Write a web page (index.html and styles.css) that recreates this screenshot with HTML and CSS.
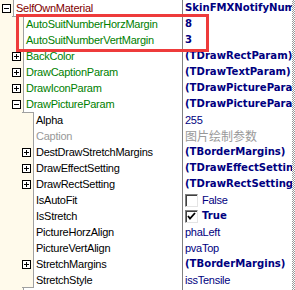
FILE: index.html
```html
<!DOCTYPE html>
<html lang="en">
<head>
  <meta charset="UTF-8">
  <title>Object Inspector</title>
  <link rel="stylesheet" href="styles.css">
</head>
<body>

  <div class="inspector">
    <div class="grid">

      <div class="row lv0">
        <div class="key"><div class="gutter"><span class="exp minus"></span></div><div class="name maroon">SelfOwnMaterial</div></div>
        <div class="value bold">SkinFMXNotifyNumber</div>
      </div>

      <div class="row lv1 first">
        <div class="key"><div class="gutter"></div><div class="name green">AutoSuitNumberHorzMargin</div></div>
        <div class="value bold">8</div>
      </div>
      <div class="row lv1">
        <div class="key"><div class="gutter"></div><div class="name green">AutoSuitNumberVertMargin</div></div>
        <div class="value bold">3</div>
      </div>
      <div class="row lv1">
        <div class="key"><div class="gutter"><span class="exp plus"></span></div><div class="name green">BackColor</div></div>
        <div class="value bold">(TDrawRectParam)</div>
      </div>
      <div class="row lv1">
        <div class="key"><div class="gutter"><span class="exp plus"></span></div><div class="name green">DrawCaptionParam</div></div>
        <div class="value bold">(TDrawTextParam)</div>
      </div>
      <div class="row lv1">
        <div class="key"><div class="gutter"><span class="exp plus"></span></div><div class="name green">DrawIconParam</div></div>
        <div class="value bold">(TDrawPictureParam)</div>
      </div>
      <div class="row lv1">
        <div class="key"><div class="gutter"><span class="exp minus"></span></div><div class="name green">DrawPictureParam</div></div>
        <div class="value bold">(TDrawPictureParam)</div>
      </div>

      <!-- DrawPictureParam children -->
      <div class="row lv2 first">
        <div class="key"><div class="gutter"></div><div class="name">Alpha</div></div>
        <div class="value">255</div>
      </div>
      <div class="row lv2">
        <div class="key"><div class="gutter"></div><div class="name gray">Caption</div></div>
        <div class="value gray cjk">图片绘制参数</div>
      </div>
      <div class="row lv2">
        <div class="key"><div class="gutter"><span class="exp plus"></span></div><div class="name">DestDrawStretchMargins</div></div>
        <div class="value bold">(TBorderMargins)</div>
      </div>
      <div class="row lv2">
        <div class="key"><div class="gutter"><span class="exp plus"></span></div><div class="name">DrawEffectSetting</div></div>
        <div class="value bold">(TDrawEffectSetting)</div>
      </div>
      <div class="row lv2">
        <div class="key"><div class="gutter"><span class="exp plus"></span></div><div class="name">DrawRectSetting</div></div>
        <div class="value bold">(TDrawRectSetting)</div>
      </div>
      <div class="row lv2">
        <div class="key"><div class="gutter"></div><div class="name">IsAutoFit</div></div>
        <div class="value"><span class="check"></span>False</div>
      </div>
      <div class="row lv2">
        <div class="key"><div class="gutter"></div><div class="name">IsStretch</div></div>
        <div class="value bold"><span class="check"><svg width="9" height="9" viewBox="0 0 9 9"><path d="M1 4 L3 6.5 L8 1" fill="none" stroke="#000" stroke-width="1.8"/></svg></span>True</div>
      </div>
      <div class="row lv2">
        <div class="key"><div class="gutter"></div><div class="name">PictureHorzAlign</div></div>
        <div class="value">phaLeft</div>
      </div>
      <div class="row lv2">
        <div class="key"><div class="gutter"></div><div class="name">PictureVertAlign</div></div>
        <div class="value">pvaTop</div>
      </div>
      <div class="row lv2">
        <div class="key"><div class="gutter"><span class="exp plus"></span></div><div class="name">StretchMargins</div></div>
        <div class="value bold">(TBorderMargins)</div>
      </div>
      <div class="row lv2 last">
        <div class="key"><div class="gutter"></div><div class="name">StretchStyle</div></div>
        <div class="value">issTensile</div>
      </div>

      <div class="row lv1">
        <div class="key"><div class="gutter"></div><div class="name green"></div></div>
        <div class="value bold"></div>
      </div>

    </div>
    <div class="strip"></div>

    <!-- highlight frame -->
    <div class="mark"></div>
  </div>

</body>
</html>
```

FILE: styles.css
```css
body {
  margin: 0;
  background: #fff;
  overflow: hidden;
  font-family: "Liberation Sans", Arial, sans-serif;
  font-size: 11px;
  letter-spacing: -0.25px;
}

.inspector {
  position: relative;
  display: flex;
  width: 295px;
  height: 290px;
  overflow: hidden;
}

.grid {
  width: 292px;
}

.row {
  display: flex;
  height: 16px;
  line-height: 16px;
}

.key {
  display: flex;
  width: 182px;
  border-right: 1px solid #808080;
  overflow: hidden;
}

.gutter {
  flex: none;
  display: flex;
  align-items: center;
  justify-content: flex-end;
  padding-right: 2px;
  box-sizing: border-box;
  background-color: #fffaeb;
  border-right: 1px solid #a0a0a0;
}

.lv0 .gutter { width: 14px; }
.lv1 .gutter { width: 24px; }
.lv2 .gutter { width: 34px; }

/* tree line steps */
.first .gutter {
  background: linear-gradient(#a0a0a0, #a0a0a0) right top / 11px 1px no-repeat, #fffaeb;
}

.last .gutter {
  background: linear-gradient(#a0a0a0, #a0a0a0) right bottom / 11px 1px no-repeat, #fffaeb;
}

.exp {
  position: relative;
  width: 9px;
  height: 9px;
  box-sizing: border-box;
  border: 1px solid #000;
  background: #fff;
}

.exp::before,
.exp::after {
  content: "";
  position: absolute;
  background: #000;
}

.exp::before {
  left: 1px;
  top: 3px;
  width: 5px;
  height: 1px;
}

.plus::after {
  left: 3px;
  top: 1px;
  width: 1px;
  height: 5px;
}

.name {
  padding-left: 2px;
  white-space: nowrap;
  color: #000;
}

.maroon { color: #800000; }
.green { color: #008000; }
.gray { color: #999; }

.value {
  display: flex;
  align-items: center;
  width: 109px;
  padding-left: 2px;
  box-sizing: border-box;
  white-space: nowrap;
  overflow: hidden;
  color: #000080;
}

.value.gray { color: #999; }

.bold {
  font-family: "DejaVu Sans", sans-serif;
  font-weight: bold;
  font-size: 10.1px;
  letter-spacing: 0;
}

.cjk {
  font-family: "Noto Sans CJK SC", sans-serif;
  font-size: 12px;
  letter-spacing: 0;
}

.check {
  display: flex;
  align-items: center;
  justify-content: center;
  width: 13px;
  height: 13px;
  box-sizing: border-box;
  margin-right: 4px;
  background: #fff;
  border-top: 1px solid #808080;
  border-left: 1px solid #808080;
  border-bottom: 1px solid #e4e4e4;
  border-right: 1px solid #e4e4e4;
  box-shadow: inset 1px 1px #404040;
}

.strip {
  width: 3px;
  background: repeating-conic-gradient(#9a9a9a 0 25%, #fff 0 50%) 0 0 / 2px 2px;
}

.mark {
  position: absolute;
  left: 16px;
  top: 14px;
  width: 193px;
  height: 38px;
  box-sizing: border-box;
  border: 3px solid #ee3b3b;
}
```
